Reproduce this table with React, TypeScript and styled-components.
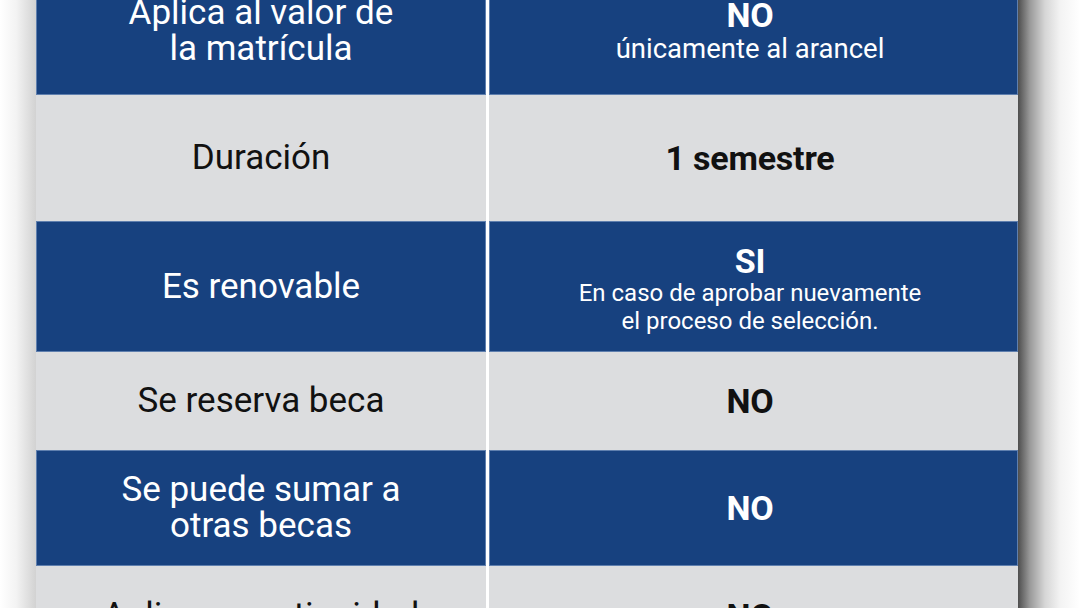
import styled, { createGlobalStyle } from 'styled-components'

const GlobalStyle = createGlobalStyle`
  html, body {
    margin: 0;
    padding: 0;
    background: #ffffff;
    overflow: hidden;
  }
  body {
    font-family: Roboto, 'Liberation Sans', Arial, sans-serif;
  }
`

const Page = styled.div`
  width: 1080px;
  height: 608px;
  overflow: hidden;
  background: #ffffff;
`

const Table = styled.div`
  position: relative;
  width: 982px;
  margin: -34px 0 0 36px;
  display: flex;
  flex-direction: column;

  &::before {
    content: '';
    position: absolute;
    top: 0;
    bottom: 0;
    left: -36px;
    width: 36px;
    background: linear-gradient(to right, #ffffff 0%, #f3f3f3 45%, #d2d2d2 100%);
  }

  &::after {
    content: '';
    position: absolute;
    top: 0;
    bottom: 0;
    right: -62px;
    width: 62px;
    background: linear-gradient(
      to right,
      #4e4e4e 0px,
      #9a9a9a 12px,
      #d6d6d6 27px,
      #f3f3f3 42px,
      #ffffff 62px
    );
  }
`

const Row = styled.div<{ $height: number }>`
  display: grid;
  grid-template-columns: 450px 529px;
  column-gap: 3px;
  height: ${({ $height }) => $height}px;
  background: #ffffff;
`

const Cell = styled.div<{ $blue?: boolean; $shift?: number; $value?: boolean }>`
  display: flex;
  flex-direction: column;
  align-items: center;
  justify-content: center;
  text-align: center;
  box-sizing: border-box;
  padding-top: ${({ $shift }) => $shift ?? 0}px;
  padding-right: ${({ $value }) => ($value ? 7 : 0)}px;
  background: ${({ $blue }) => ($blue ? '#17417f' : '#dcdddf')};
  color: ${({ $blue }) => ($blue ? '#ffffff' : '#111111')};
  border: 1px solid ${({ $blue }) => ($blue ? '#5f7fae' : '#dcdddf')};
`

const Label = styled.div`
  font-size: 35px;
  line-height: 36px;
  font-weight: 400;
`

const Value = styled.div`
  font-size: 34px;
  line-height: 36px;
  font-weight: 700;
  letter-spacing: -0.2px;
`

const Note = styled.div<{ $size: number; $line: number }>`
  font-size: ${({ $size }) => $size}px;
  line-height: ${({ $line }) => $line}px;
  font-weight: 400;
`

type RowData = {
  height: number
  label: string[]
  value: string
  note?: string[]
  noteSize?: number
  noteLine?: number
  shift?: number
}

const rows: RowData[] = [
  {
    height: 129,
    label: ['Aplica al valor de', 'la matrícula'],
    value: 'NO',
    note: ['únicamente al arancel'],
    noteSize: 27.5,
    noteLine: 32,
  },
  { height: 126, label: ['Duración'], value: '1 semestre' },
  {
    height: 131,
    label: ['Es renovable'],
    value: 'SI',
    note: ['En caso de aprobar nuevamente', 'el proceso de selección.'],
    noteSize: 24,
    noteLine: 28,
    shift: 4,
  },
  { height: 98, label: ['Se reserva beca'], value: 'NO' },
  { height: 116, label: ['Se puede sumar a', 'otras becas'], value: 'NO' },
  { height: 100, label: ['Aplica a continuidad'], value: 'NO' },
]

export default function App() {
  return (
    <Page>
      <GlobalStyle />
      <Table>
        {rows.map((row, i) => {
          const blue = i % 2 === 0
          return (
            <Row key={i} $height={row.height}>
              <Cell $blue={blue}>
                {row.label.map((line) => (
                  <Label key={line}>{line}</Label>
                ))}
              </Cell>
              <Cell $blue={blue} $shift={row.shift} $value>
                <Value>{row.value}</Value>
                {row.note?.map((line) => (
                  <Note key={line} $size={row.noteSize ?? 24} $line={row.noteLine ?? 28}>
                    {line}
                  </Note>
                ))}
              </Cell>
            </Row>
          )
        })}
      </Table>
    </Page>
  )
}
